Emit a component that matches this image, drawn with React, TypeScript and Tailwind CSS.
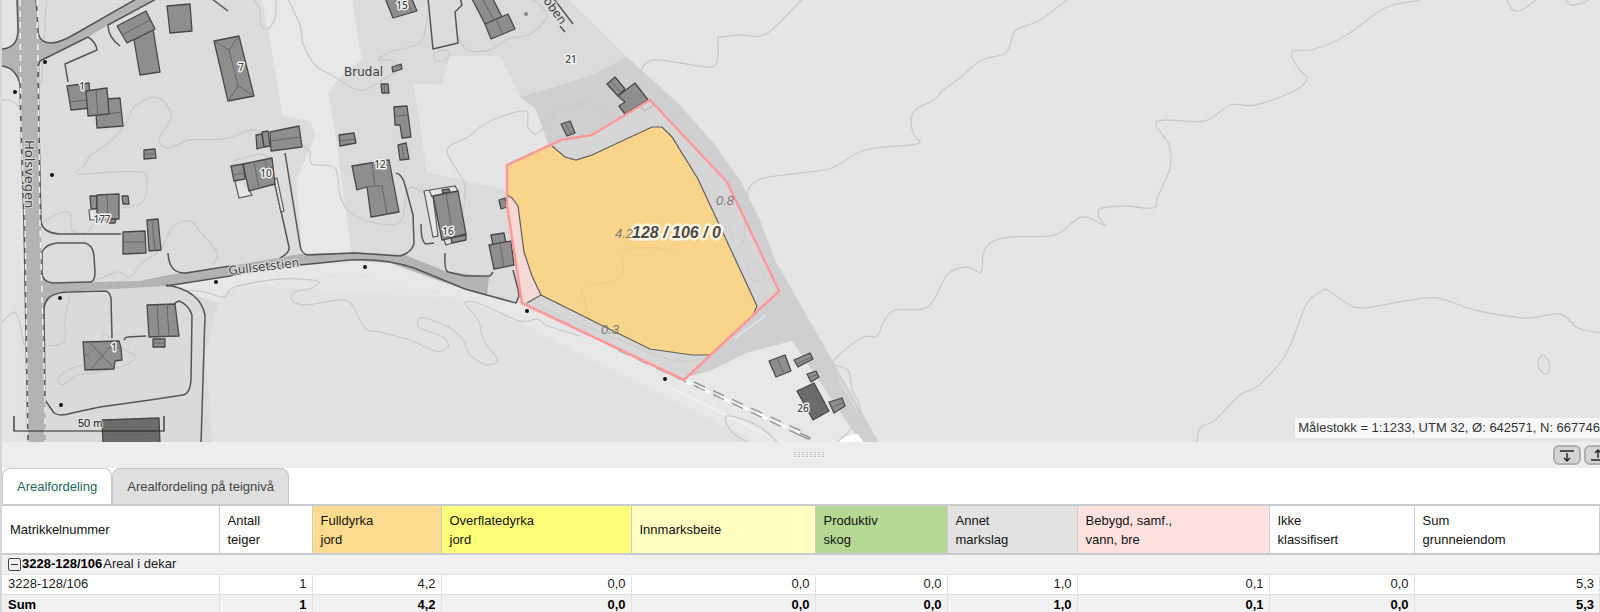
import { useState } from 'react';
import { clsx } from 'clsx';

type Point = [number, number];

interface Building {
  shape: string;
  ridge?: string;
  dark?: boolean;
}

interface MapLabel {
  x: number;
  y: number;
  text: string;
}

interface Column {
  title: string[];
  col: string;
  color: string;
}

const columns: Column[] = [
  { title: ['Matrikkelnummer'], col: 'w-[217px]', color: 'bg-white' },
  { title: ['Antall', 'teiger'], col: 'w-[93px]', color: 'bg-white' },
  { title: ['Fulldyrka', 'jord'], col: 'w-[129px]', color: 'bg-[#ffdb8f]' },
  { title: ['Overflatedyrka', 'jord'], col: 'w-[190px]', color: 'bg-[#ffff78]' },
  { title: ['Innmarksbeite'], col: 'w-[184px]', color: 'bg-[#ffffc0]' },
  { title: ['Produktiv', 'skog'], col: 'w-[132px]', color: 'bg-[#b5d994]' },
  { title: ['Annet', 'markslag'], col: 'w-[130px]', color: 'bg-[#e2e2e2]' },
  { title: ['Bebygd, samf.,', 'vann, bre'], col: 'w-[192px]', color: 'bg-[#ffe2df]' },
  { title: ['Ikke', 'klassifisert'], col: 'w-[145px]', color: 'bg-white' },
  { title: ['Sum', 'grunneiendom'], col: 'w-auto', color: 'bg-white' },
];

const values = ['1', '4,2', '0,0', '0,0', '0,0', '1,0', '0,1', '0,0', '5,3'];

const buildings: Building[] = [
  { shape: '134,40 153,29 160,72 140,75' },
  { shape: '117,26 146,11 155,29 127,43', ridge: 'M122 35 150 20' },
  { shape: '167,6 190,4 192,31 170,33' },
  { shape: '214,41 239,36 254,96 228,101', ridge: 'M214 41 229 50 239 36M229 50 238 86M228 101 238 86 254 96' },
  { shape: '95,100 120,98 123,126 97,128', ridge: 'M97 115 122 112' },
  { shape: '67,86 89,83 91,108 71,110', ridge: 'M69 102 87 100' },
  { shape: '86,91 107,88 109,114 88,116', ridge: 'M96 90 98 115' },
  { shape: '144,150 155,149 156,158 144,159', ridge: 'M144 154 156 154' },
  { shape: '90,196 97,196 97,209 91,209' },
  { shape: '97,195 119,194 119,219 97,220', ridge: 'M107 195 108 219' },
  { shape: '105,220 116,219 115,223 107,223' },
  { shape: '122,196 128,196 129,204 123,204' },
  { shape: '123,232 145,231 146,253 123,254', ridge: 'M123 242 146 242' },
  { shape: '147,220 158,219 161,250 149,251', ridge: 'M152 220 155 250' },
  { shape: '147,305 175,304 179,336 149,337', ridge: 'M157 305 159 337M167 304 169 337' },
  { shape: '153,339 165,339 165,347 153,347', ridge: 'M153 343 165 343' },
  { shape: '83,342 119,341 121,348 122,360 115,361 114,369 85,370', ridge: 'M90 343 114 368M114 342 91 369M84 355 89 355M113 348 121 348' },
  { shape: '102,420 159,418 160,444 103,444', ridge: 'M103 435 160 434', dark: true },
  { shape: '270,132 299,126 302,147 271,151', ridge: 'M270 141 300 137' },
  { shape: '256,135 262,134 264,147 257,149' },
  { shape: '262,132 268,131 270,146 264,147' },
  { shape: '231,166 243,164 245,179 234,181', ridge: 'M233 175 244 173' },
  { shape: '243,164 272,158 275,184 249,191', ridge: 'M254 162 259 188M265 160 267 168 274 167' },
  { shape: '339,135 354,133 356,143 340,146', ridge: 'M340 141 355 139' },
  { shape: '392,67 401,64 402,69 393,72' },
  { shape: '381,84 388,84 389,93 382,93', ridge: 'M384 84 385 93' },
  { shape: '394,107 407,106 411,137 402,138 400,125 395,125', ridge: 'M395 116 408 115' },
  { shape: '398,145 406,143 409,159 400,160', ridge: 'M402 144 404 160' },
  { shape: '352,166 389,160 399,212 371,217 367,187 357,190', ridge: 'M372 163 375 186 382 186 387 214M367 187 375 186' },
  { shape: '433,196 458,191 466,234 442,240', ridge: 'M446 193 453 237' },
  { shape: '442,190 449,189 450,192 443,193' },
  { shape: '451,238 466,235 466,240 452,243' },
  { shape: '385,-2 393,18 417,11 411,-3', ridge: 'M408 3 412 12' },
  { shape: '471,-3 485,24 502,17 492,-3', ridge: 'M482 -2 494 20' },
  { shape: '485,24 508,14 515,29 491,39', ridge: 'M496 19 503 34' },
  { shape: '618,96 635,83 648,100 625,114 619,106 625,102' },
  { shape: '607,84 615,77 625,89 618,96', ridge: 'M611 81 621 93' },
  { shape: '561,124 570,121 575,133 567,136', ridge: 'M565 123 571 134' },
  { shape: '499,200 505,198 507,207 501,209' },
  { shape: '491,235 504,233 506,243 493,245' },
  { shape: '489,245 511,241 514,265 494,269', ridge: 'M500 243 504 267' },
  { shape: '769,361 785,355 791,371 776,377', ridge: 'M777 358 784 374' },
  { shape: '794,360 810,353 813,359 798,367', ridge: 'M796 364 812 357' },
  { shape: '807,374 816,371 819,377 811,382', ridge: 'M809 378 818 374' },
  { shape: '797,391 814,383 829,411 813,420', dark: true },
  { shape: '829,402 842,398 845,406 834,413', ridge: 'M831 408 844 402' },
];

// Height contours, given as the points the curve runs through
const contours: Point[][] = [
  [[1068, -1], [1040, 20], [1016, 30], [1010, 45], [1004, 54], [980, 61], [960, 78], [943, 90], [934, 100], [915, 110], [911, 122], [915, 137], [920, 141], [912, 145], [865, 150], [832, 168], [800, 173], [764, 178], [750, 187], [746, 200]],
  [[1420, 0], [1385, 8], [1345, 36], [1315, 49], [1292, 52], [1298, 68], [1307, 79], [1292, 92], [1255, 105], [1230, 105], [1205, 121], [1165, 120], [1156, 125], [1169, 145], [1170, 168], [1158, 196], [1153, 208], [1125, 206], [1100, 209], [1100, 219], [1104, 225], [1081, 217], [1055, 235], [1010, 237], [990, 243], [983, 255], [981, 272], [966, 267], [947, 275], [928, 307], [895, 310], [884, 321], [877, 336], [864, 337], [842, 352], [833, 364], [848, 370], [852, 390], [860, 408], [850, 430], [838, 441]],
  [[803, -2], [775, 27], [760, 36], [740, 35], [721, 37], [718, 38], [718, 55], [712, 67], [681, 63], [654, 60], [642, 68], [643, 82], [641, 95], [650, 110], [641, 122], [620, 125], [610, 119], [600, 107], [585, 103], [560, 110], [538, 133], [528, 127], [526, 111], [500, 117], [483, 125], [468, 137], [450, 146], [448, 155], [458, 172], [465, 186], [463, 215]],
  [[1197, 443], [1200, 428], [1215, 420], [1240, 395], [1258, 386], [1286, 354], [1306, 305], [1320, 292], [1328, 290], [1345, 302], [1362, 308], [1405, 301], [1437, 298], [1475, 310], [1525, 318], [1560, 314], [1578, 328], [1601, 333]],
  [[1506, -1], [1513, 10], [1522, 10], [1537, -1]],
  [[1565, -1], [1571, 5], [1582, 3], [1590, -1]],
  [[1538, 360], [1543, 355], [1549, 362], [1549, 371], [1545, 374], [1539, 368], [1538, 360]],
  [[2, 100], [14, 102], [22, 112]],
  [[47, -1], [45, 20], [44, 50], [41, 85]],
  [[254, -1], [260, 10], [261, 25], [268, 29], [275, 18], [276, -1]],
  [[288, -1], [300, 25], [303, 44], [315, 65], [330, 74], [352, 88], [364, 90], [374, 85], [392, 74], [397, 66], [390, 60], [378, 60], [390, 52], [410, 47], [422, 40], [428, 15]],
  [[264, 138], [257, 130], [248, 131], [223, 139], [190, 140], [168, 148], [159, 141], [164, 130], [171, 118], [166, 104], [154, 97], [135, 106], [125, 125], [108, 143], [90, 156], [84, 166], [78, 170], [80, 174], [115, 172], [144, 173], [147, 190], [140, 204], [122, 208]],
  [[43, 222], [58, 214], [70, 213], [72, 230], [85, 233], [93, 225]],
  [[95, 281], [118, 272], [130, 277], [142, 263], [160, 250], [172, 228], [190, 221], [203, 235], [217, 252], [213, 265]],
  [[70, 293], [65, 320], [64, 342], [46, 346]],
  [[2, 322], [16, 313], [24, 345]],
  [[57, 378], [62, 385], [78, 375], [100, 372], [128, 364], [135, 356], [122, 348], [105, 334], [102, 344]],
  [[57, 378], [70, 369], [84, 365]],
  [[234, 161], [260, 154], [272, 160]],
  [[302, 144], [310, 152], [312, 164], [335, 168], [340, 195], [350, 212], [375, 223], [400, 222], [406, 195], [412, 187], [425, 194]],
  [[458, 35], [467, 50], [490, 50], [508, 39], [530, 34], [547, 17], [540, 5], [532, -1]],
  [[434, 53], [444, 50], [450, 54], [444, 60], [435, 60], [434, 53]],
  [[187, 290], [205, 292], [224, 297], [235, 287], [280, 279], [317, 281], [312, 288], [295, 292], [292, 300], [305, 305], [340, 300], [352, 305], [365, 328], [380, 332], [410, 340], [435, 351], [448, 347], [443, 337], [420, 328], [418, 320], [425, 318], [450, 328], [463, 340], [470, 355], [488, 365], [497, 359], [484, 341], [478, 320], [465, 303], [480, 304], [520, 321], [537, 319], [548, 326], [580, 336]],
  [[749, 443], [733, 433], [725, 418], [735, 417], [760, 427], [778, 443]],
];

// Fainter contours, seen through the property overlay
const overlayContours: Point[][] = [
  [[506, 232], [513, 234], [516, 245]],
  [[667, 116], [674, 115], [677, 128]],
  [[744, 207], [745, 232], [740, 246], [732, 238], [728, 228]],
  [[747, 267], [756, 263], [765, 275], [761, 281], [751, 278], [747, 267]],
];

const fieldContour: Point[] = [[588, 320], [586, 305], [581, 291], [590, 285], [611, 282], [622, 275], [622, 262], [621, 252], [635, 248], [658, 248], [671, 250], [682, 242]];

const roadEdges = [
  'M17 -2 18 30Q18 48 2 49',
  'M2 66Q16 68 20 84L21 130 24 225 28 444',
  'M36 -2 38 30Q38 43 52 43 62 42 75 34L138 -2',
  'M88 37 40 61 38 66 39 130 41 222Q43 233 60 234L121 234',
  'M57 243 85 243Q93 245 94 256L95 272Q95 282 90 282L52 283Q42 281 42 273L42 252Q46 244 57 243Z',
  'M112 338 111 298Q110 293 106 291L70 292Q44 292 44 310L45 400 54 413Q60 417 72 413L100 407 150 400 183 395Q190 394 191 380L192 315Q188 304 179 301 175 302 174 305',
  'M168 253Q169 274 186 273L230 266',
  'M166 285Q200 290 205 315L201 444',
  'M166 286 230 276 272 266M300 265 350 260Q385 258 414 268L465 289 516 303 519 296 518 289 513 270',
  'M124 340Q125 337 128 337L146 336',
  'M68 82 65 64 97 50Q96 42 88 37',
  'M120 46Q108 37 108 25L158 -2',
  'M212 -1 228 11',
  'M274 180 289 247Q290 253 280 258',
  'M285 153 300 245Q301 254 308 255L355 253 400 256Q411 253 414 244L413 215 405 185Q402 174 396 173',
  'M445 253Q444 270 448 272L465 276 490 276 493 272',
  'M421 224Q421 242 426 244L434 243',
  'M428 -2 433 49 458 43 455 12 462 5 460 -2',
  'M554 -1 573 24M560 26 565 32',
];

const outlines = [
  'M235 181 239 198 252 195 249 190',
  'M274 180 281 212 284 211 277 178Z',
  'M424 191 455 186 458 191 433 196 438 236 433 237Z',
  'M429 190 432 197M444 240 446 245 452 243',
  'M91 210 89 210 90 220 97 220',
];

const poles: Point[] = [[45, 62], [15, 92], [52, 175], [60, 298], [61, 405], [216, 282], [365, 267], [527, 311], [665, 379]];

const houseNumbers: MapLabel[] = [
  { x: 241, y: 71, text: '7' },
  { x: 82, y: 90, text: '1' },
  { x: 102, y: 223, text: '177' },
  { x: 266, y: 177, text: '10' },
  { x: 380, y: 168, text: '12' },
  { x: 448, y: 235, text: '16' },
  { x: 402, y: 9, text: '15' },
  { x: 571, y: 63, text: '21' },
  { x: 803, y: 412, text: '26' },
  { x: 114, y: 351, text: '1' },
];

const areaLabels: MapLabel[] = [
  { x: 615, y: 238, text: '4.2' },
  { x: 716, y: 205, text: '0.8' },
  { x: 601, y: 334, text: '0.3' },
];

// Catmull-Rom through the points, written as cubic segments
function smooth(points: Point[]) {
  let d = `M${points[0][0]} ${points[0][1]}`;
  for (let i = 0; i < points.length - 1; i++) {
    const p0 = points[i - 1] || points[i];
    const p1 = points[i];
    const p2 = points[i + 1];
    const p3 = points[i + 2] || p2;
    d += `C${p1[0] + (p2[0] - p0[0]) / 6} ${p1[1] + (p2[1] - p0[1]) / 6} ${p2[0] - (p3[0] - p1[0]) / 6} ${p2[1] - (p3[1] - p1[1]) / 6} ${p2[0]} ${p2[1]}`;
  }
  return d;
}

function Terrain() {
  return (
    <g>
      <rect width="1600" height="444" fill="#e5e5e5" />
      <path d="M0 270 516 302 700 390 790 444H0Z" fill="#e2e2e2" />
      <path d="M165 286 300 266 380 262 450 286 516 303 684 380 800 444H760L510 318 440 292 350 272 225 290 218 303Z" fill="#e7e7e7" />
      {/* Built-up areas */}
      <path d="M36 0H262L270 40 283 116 311 121 316 136 296 180 303 255 165 288 40 292Z" fill="#dcdcdc" />
      <path d="M42 285 165 284 187 292 218 303 205 354 213 444H45Z" fill="#dadada" />
      <path d="M0 0H20V444H0Z" fill="#e3e3e3" />
      <path d="M262 0H352L362 60 337 80 328 93 335 130 352 255H303L296 180 316 136 311 121 283 116 270 40Z" fill="#e8e8e8" />
      <path d="M352 0H569L627 57 648 100 520 98 500 56 450 56 442 85 414 84 418 110 427 172 506 190 522 303 470 292 400 256 352 255 335 130 328 93 337 80 362 60Z" fill="#dbdbdb" />
      <path d="M450 56 500 56 520 98 535 108 550 145 506 165 506 190 427 172 418 110 414 84 442 85Z" fill="#e5e5e5" />
      {/* Forest belt */}
      <path d="M520 97 590 76 627 57 680 105 715 145 740 180 760 220 775 260 880 444H863L852 430 792 341 747 353 710 371 684 378 522 303 548 143 535 108Z" fill="#cfcfcf" />
      <path d="M684 378 710 371 747 353 792 341 852 430 863 444H790Z" fill="#e7e7e7" />
      <path d="M671 388 785 444" stroke="#efefef" strokeWidth="3" />
      <path d="M837 444Q845 434 858 434L865 444Z" fill="#fff" />
      <path d="M838 377 858 412" stroke="#e4e4e4" strokeWidth="1" />
      <path d="M735 338 766 315" stroke="#e0e0e0" strokeWidth="2" />
    </g>
  );
}

function Roads() {
  return (
    <g>
      <path d="M17 0H36L37 33Q38 43 52 43 62 42 75 34L138 -2H158L108 25 88 37 40 61 39 130 42 270Q43 283 55 283L140 281 168 275 230 266 300 254 355 252 405 255 445 271 489 277 487 296 440 281 390 263 350 260 272 268 166 286 60 292Q45 294 44 315L46 444H28L24 225 20 84Q15 68 2 66V49Q17 48 18 35Z" fill="#b3b3b3" />
      <g fill="none" stroke="#555" strokeWidth="1.5" strokeLinejoin="round">
        {roadEdges.map((d) => (
          <path key={d} d={d} />
        ))}
      </g>
      <g fill="none" stroke="#f0f0f0" strokeWidth="1.5" strokeDasharray="6 5">
        <path d="M20 0 21 130 25 225 28 444" />
        <path d="M37 0 38 66 40 225 45 400 45 444" />
      </g>
      <path d="M680 379 808 437" stroke="#fff" strokeWidth="3" strokeDasharray="12 9" />
      <g fill="none" stroke="#9a9a9a" strokeWidth="1.5" strokeDasharray="12 9">
        <path d="M618 350 680 379 806 438" />
        <path d="M694 382 808 434" />
      </g>
      <path d="M800 433 809 437Q812 439 808 439L800 435" fill="none" stroke="#9a9a9a" strokeWidth="1.5" />
    </g>
  );
}

function PropertyLayer() {
  return (
    <g>
      <path d="M650 100 592 135 561 140 507 165 506 200 522 303 684 380 779 291 727 182Z" fill="#d6d6d6" />
      <g fill="none" stroke="#cccccc" strokeWidth="1">
        <path d="M540 307 600 332 660 357Q680 364 698 360L716 354" />
        <path d="M545 312 590 332" strokeDasharray="12 8" />
        <path d="M640 106 644 111 654 105" stroke="#b0b0b0" />
        {overlayContours.map((points, i) => (
          <path key={i} d={smooth(points)} />
        ))}
      </g>
      <path d="M552 146 565 157 576 160 592 155 652 127 662 127 672 137 698 179 757 306 754 313 711 355 692 355 650 349 605 327 541 295 532 276 524 252 518 206 512 198 507 195V165Z" fill="#f8d58a" />
      <path d={smooth(fieldContour)} fill="none" stroke="#efcd84" strokeWidth="1" />
      <path d="M507 195 512 198 518 206 524 252 532 276 541 295 527 303H522L506 200Z" fill="#f5d9d6" />
      <path d="M552 146 565 157 576 160 592 155 652 127 662 127 672 137 698 179 757 306 754 313M711 355 692 355 650 349 605 327 541 295 532 276 524 252 518 206 512 198 507 195M541 295 527 303" fill="none" stroke="#5f5f5f" strokeWidth="1.2" />
      <path d="M650 100 592 135 561 140 507 165 507 205 522 303 684 380 779 291 727 182Z" fill="none" stroke="#ff9999" strokeWidth="2.5" strokeLinejoin="round" />
    </g>
  );
}

function MapLabels() {
  return (
    <g>
      <g className="font-['DejaVu_Sans',sans-serif] text-[12px]" fill="#404040" stroke="#dcdcdc" strokeWidth="2" paintOrder="stroke">
        <text x="344" y="76">Brudal</text>
        <text transform="translate(229 275) rotate(-7)">Gullsetstien</text>
        <text transform="translate(25 140) rotate(90)" className="text-[13px]">Holsvegen</text>
        <text transform="translate(543 1) rotate(54)">oben</text>
      </g>
      <g className="font-['Noto_Sans',sans-serif] text-[10px] font-medium" fill="#444" stroke="#f2f2f2" strokeWidth="3" strokeLinejoin="round" paintOrder="stroke" textAnchor="middle">
        {houseNumbers.map((label) => (
          <text key={`${label.x}-${label.y}`} x={label.x} y={label.y}>{label.text}</text>
        ))}
      </g>
      <text x="632" y="238" className="text-[16px] font-bold italic" fill="#4a4a4a" stroke="#fff6e0" strokeWidth="5" strokeLinejoin="round" paintOrder="stroke">
        128 / 106 / 0
      </text>
      <g className="text-[13px] italic" fill="#7d7a74">
        {areaLabels.map((label) => (
          <text key={label.text} x={label.x} y={label.y}>{label.text}</text>
        ))}
      </g>
    </g>
  );
}

function MapView() {
  return (
    <div className="relative overflow-hidden">
      <svg viewBox="2 0 1598 442" className="block w-full h-auto" role="img" aria-label="Kart">
        <Terrain />
        <g fill="none" stroke="#cbcbcb" strokeWidth="1.3">
          {contours.map((points, i) => (
            <path key={i} d={smooth(points)} />
          ))}
        </g>
        <Roads />
        <g fill="#e6e6e6" stroke="#5a5a5a" strokeWidth="1.2">
          {outlines.map((d) => (
            <path key={d} d={d} />
          ))}
        </g>
        {buildings.map((b) => (
          <g key={b.shape} stroke="#484848" strokeLinejoin="round">
            <polygon points={b.shape} fill={b.dark ? '#6c6c6c' : '#8e8e8e'} strokeWidth="1.3" />
            {b.ridge && <path d={b.ridge} fill="none" stroke="#666" strokeWidth="1" />}
          </g>
        ))}
        <circle cx="526" cy="14" r="2" fill="#888" />
        <PropertyLayer />
        {poles.map(([x, y]) => (
          <circle key={`${x}-${y}`} cx={x} cy={y} r="2" fill="#111" />
        ))}
        <MapLabels />
        <path d="M14 416V431H164V416" fill="none" stroke="#222" strokeWidth="1.2" />
        <text x="78" y="427" className="text-[11px]" fill="#111" stroke="#e6e6e6" strokeWidth="2" paintOrder="stroke">50 m</text>
      </svg>
      <div className="absolute right-0 bottom-1 h-5 bg-[#f7f7f7] pl-[3px] leading-5 whitespace-nowrap text-[#333]">
        Målestokk = 1:1233, UTM 32, Ø: 642571, N: 667746
      </div>
    </div>
  );
}

function Splitter() {
  const button = 'flex h-5 w-7 items-center justify-center rounded-md border-2 border-[#b0b0b0] bg-[#d4d4d4] text-[#222]';
  return (
    <div className="-mr-4 grid h-[26px] grid-cols-[1fr_auto_1fr] items-center bg-[#ededed]">
      <svg width="30" height="6" className="col-start-2" fill="#c4c4c4">
        {[0, 1, 2, 3, 4, 5, 6, 7].map((i) => (
          <path key={i} d={`M${i * 4} 0h2v1h-2zM${i * 4} 2h2v1h-2zM${i * 4} 4h2v1h-2z`} />
        ))}
      </svg>
      <div className="flex justify-end gap-[3px] pr-1">
        <button type="button" aria-label="Minimer tabell" className={button}>
          <svg width="14" height="14" fill="none" stroke="currentColor" strokeWidth="1.4">
            <path d="M0 3H14M7 5V13M4 10 7 13 10 10" />
          </svg>
        </button>
        <button type="button" aria-label="Maksimer tabell" className={button}>
          <svg width="14" height="14" fill="none" stroke="currentColor" strokeWidth="1.4">
            <path d="M0 12H14M7 10V2M4 5 7 2 10 5" />
          </svg>
        </button>
      </div>
    </div>
  );
}

export default function App() {
  const [tab, setTab] = useState(0);
  const [open, setOpen] = useState(true);

  return (
    <div className="h-screen overflow-hidden border-l-2 border-[#d3d6da] bg-white font-['Liberation_Sans',Arial,sans-serif] text-[13px] text-[#222]">
      <MapView />
      <Splitter />

      <div role="tablist" className="flex h-9">
        {['Arealfordeling', 'Arealfordeling på teignivå'].map((name, i) => (
          <button
            key={name}
            type="button"
            role="tab"
            aria-selected={tab === i}
            onClick={() => setTab(i)}
            className={clsx(
              'rounded-t-lg border border-b-0 border-[#c8c8c8] px-[14px]',
              tab === i ? 'bg-white text-[#1c6b62]' : 'bg-[#dfdfdf] text-[#444]'
            )}
          >
            {name}
          </button>
        ))}
      </div>

      <table className="w-full table-fixed border-collapse">
        <colgroup>
          {columns.map((c) => (
            <col key={c.title[0]} className={c.col} />
          ))}
        </colgroup>
        <thead>
          <tr className="h-[49px] border-y-2 border-[#c9ccce]">
            {columns.map((c) => (
              <th key={c.title[0]} scope="col" className={clsx('border-r border-[#cfcfcf] pl-2 text-left leading-[19px] font-normal text-[#111]', c.color)}>
                {c.title.map((line) => (
                  <span key={line} className="block">{line}</span>
                ))}
              </th>
            ))}
          </tr>
        </thead>
        <tbody>
          <tr className="h-5 bg-[#f1f1f1]">
            <td colSpan={columns.length} className="pl-[6px]">
              <div className="flex items-center gap-px leading-[18px]">
                <button
                  type="button"
                  aria-label="Vis eller skjul gruppe"
                  onClick={() => setOpen(!open)}
                  className="flex size-[13px] items-center justify-center rounded-xs border border-[#444]"
                >
                  <svg width="7" height="7" stroke="#333">
                    <path d={open ? 'M0 3.5H7' : 'M0 3.5H7M3.5 0V7'} />
                  </svg>
                </button>
                <b className="text-black">3228-128/106</b>
                <span>Areal i dekar</span>
              </div>
            </td>
          </tr>
          {open && (
            <tr className="h-5 border-y border-[#dfe3e8] leading-[18px]">
              <td className="border-r border-[#dfe3e8] pl-[6px]">3228-128/106</td>
              {values.map((v, i) => (
                <td key={i} className="border-r border-[#dfe3e8] pr-[5px] text-right">{v}</td>
              ))}
            </tr>
          )}
          <tr className="h-5 bg-[#f1f1f1] leading-5 font-bold text-black">
            <td className="border-r border-[#dfe3e8] pl-[6px]">Sum</td>
            {values.map((v, i) => (
              <td key={i} className="border-r border-[#dfe3e8] pr-[5px] text-right">{v}</td>
            ))}
          </tr>
        </tbody>
      </table>
    </div>
  );
}
